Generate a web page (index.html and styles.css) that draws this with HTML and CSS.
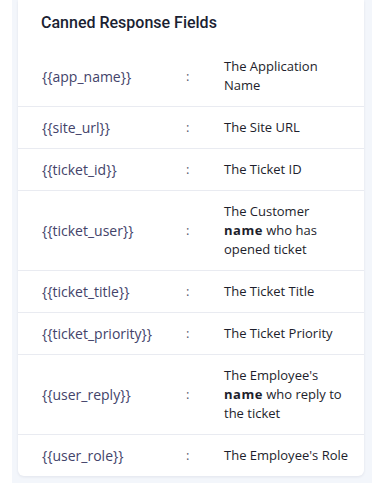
FILE: index.html
```html
<!DOCTYPE html>
<html>
<head>
<meta charset="utf-8">
<link rel="stylesheet" href="styles.css">
</head>
<body>
<div class="panel">
  <div class="card">
    <h2 class="title">Canned Response Fields</h2>
    <div class="rows">
      <div class="row"><span class="key">{{app_name}}</span><span class="sep">:</span><span class="val">The Application Name</span></div>
      <div class="row"><span class="key">{{site_url}}</span><span class="sep">:</span><span class="val">The Site URL</span></div>
      <div class="row"><span class="key">{{ticket_id}}</span><span class="sep">:</span><span class="val">The Ticket ID</span></div>
      <div class="row"><span class="key">{{ticket_user}}</span><span class="sep">:</span><span class="val">The Customer <b>name</b> who has opened ticket</span></div>
      <div class="row"><span class="key">{{ticket_title}}</span><span class="sep">:</span><span class="val">The Ticket Title</span></div>
      <div class="row"><span class="key">{{ticket_priority}}</span><span class="sep">:</span><span class="val">The Ticket Priority</span></div>
      <div class="row"><span class="key">{{user_reply}}</span><span class="sep">:</span><span class="val">The Employee's <b>name</b> who reply to the ticket</span></div>
      <div class="row"><span class="key">{{user_role}}</span><span class="sep">:</span><span class="val">The Employee's Role</span></div>
    </div>
  </div>
</div>
</body>
</html>
```
FILE: styles.css
```css
html, body {
  margin: 0;
  padding: 0;
  background: #ffffff;
}
.panel {
  margin: 0 12px;
  background: #f3f6fb;
  padding: 0 8px 7px 6px;
}
.card {
  background: #ffffff;
  border-radius: 0 0 6px 6px;
  box-shadow: 0 1px 3px rgba(20, 30, 60, 0.08);
}
.title {
  margin: 0;
  height: 46px;
  box-sizing: border-box;
  padding: 12px 0 0 23px;
  font-family: Roboto, "Liberation Sans", sans-serif;
  font-weight: 500;
  font-size: 16px;
  line-height: 22px;
  color: #1b1f33;
}
.row {
  display: grid;
  grid-template-columns: 144px 38px 127px;
  align-items: center;
  padding: 11px 0 11px 24px;
  font-family: "Open Sans", sans-serif;
  font-size: 13px;
  line-height: 19px;
}
.row + .row {
  border-top: 1px solid #e9ebf1;
}
.key {
  color: #43436a;
  font-weight: 400;
  font-size: 14px;
}
.sep {
  color: #5a5d70;
}
.val {
  color: #1d1e2c;
  font-weight: 500;
}
.val b {
  font-weight: 700;
  letter-spacing: 0.5px;
}
```
